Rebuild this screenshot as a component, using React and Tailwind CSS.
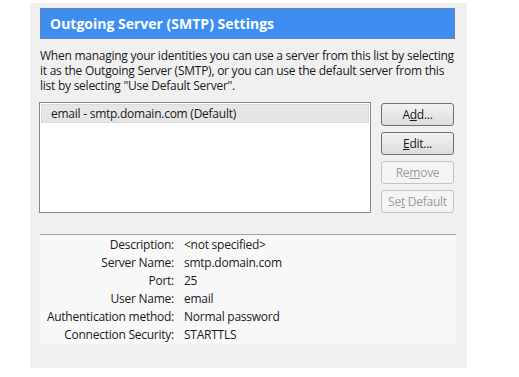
export default function App() {
  const rows = [
    ["Description:", "<not specified>"],
    ["Server Name:", "smtp.domain.com"],
    ["Port:", "25"],
    ["User Name:", "email"],
    ["Authentication method:", "Normal password"],
    ["Connection Security:", "STARTTLS"],
  ];
  const font = { fontFamily: '"Open Sans", "Noto Sans", sans-serif' };
  return (
    <div className="w-[519px] h-[377px] bg-white overflow-hidden" style={font}>
      <div className="ml-[30px] mt-[3px] w-[437px] h-[365px] bg-[#f0f0f0] pl-[10px] pt-[5px] text-[12px] tracking-[-0.25px] text-[#1a1a1a]">
        <div className="w-[415px] h-[31px] bg-[#3d8ef0] border border-[#5f86b8] flex items-center pl-[9px] text-white font-bold text-[14px] tracking-normal">
          Outgoing Server (SMTP) Settings
        </div>
        <p className="mt-[9px] leading-[15px] w-[414px]">
          When managing your identities you can use a server from this list by selecting it as the Outgoing Server (SMTP), or you can use the default server from this list by selecting "Use Default Server".
        </p>
        <div className="flex mt-[9px] -ml-[1px]">
          <div className="w-[332px] h-[111px] bg-white border border-[#828790] p-[1px]">
            <div className="h-[19px] bg-[#e6e6e6] border border-[#dadada] flex items-center pl-[9px]">
              email - smtp.domain.com (Default)
            </div>
          </div>
          <div className="ml-[10px] flex flex-col gap-[6px] mt-[1px]">
            <button className="w-[73px] h-[23px] rounded-[3px] border border-[#707070] bg-gradient-to-b from-[#f2f2f2] to-[#dddddd] text-[12px] leading-none">
              A<span className="underline">d</span>d...
            </button>
            <button className="w-[73px] h-[23px] rounded-[3px] border border-[#707070] bg-gradient-to-b from-[#f2f2f2] to-[#dddddd] text-[12px] leading-none">
              <span className="underline">E</span>dit...
            </button>
            <button className="w-[73px] h-[23px] rounded-[3px] border border-[#c4c4c4] bg-[#f4f4f4] text-[#9c9c9c] text-[12px] leading-none">
              Re<span className="underline">m</span>ove
            </button>
            <button className="w-[73px] h-[23px] rounded-[3px] border border-[#c4c4c4] bg-[#f4f4f4] text-[#9c9c9c] text-[12px] leading-none">
              Se<span className="underline">t</span> Default
            </button>
          </div>
        </div>
        <div className="mt-[21px] w-[416px] h-[110px] bg-[#f8f8f8] border-t border-[#a0a0a0] pt-[1px]">
          {rows.map(([k, v]) => (
            <div key={k} className="flex h-[18px] items-center">
              <div className="w-[134px] text-right">{k}</div>
              <div className="ml-[10px]">{v}</div>
            </div>
          ))}
        </div>
      </div>
    </div>
  );
}
